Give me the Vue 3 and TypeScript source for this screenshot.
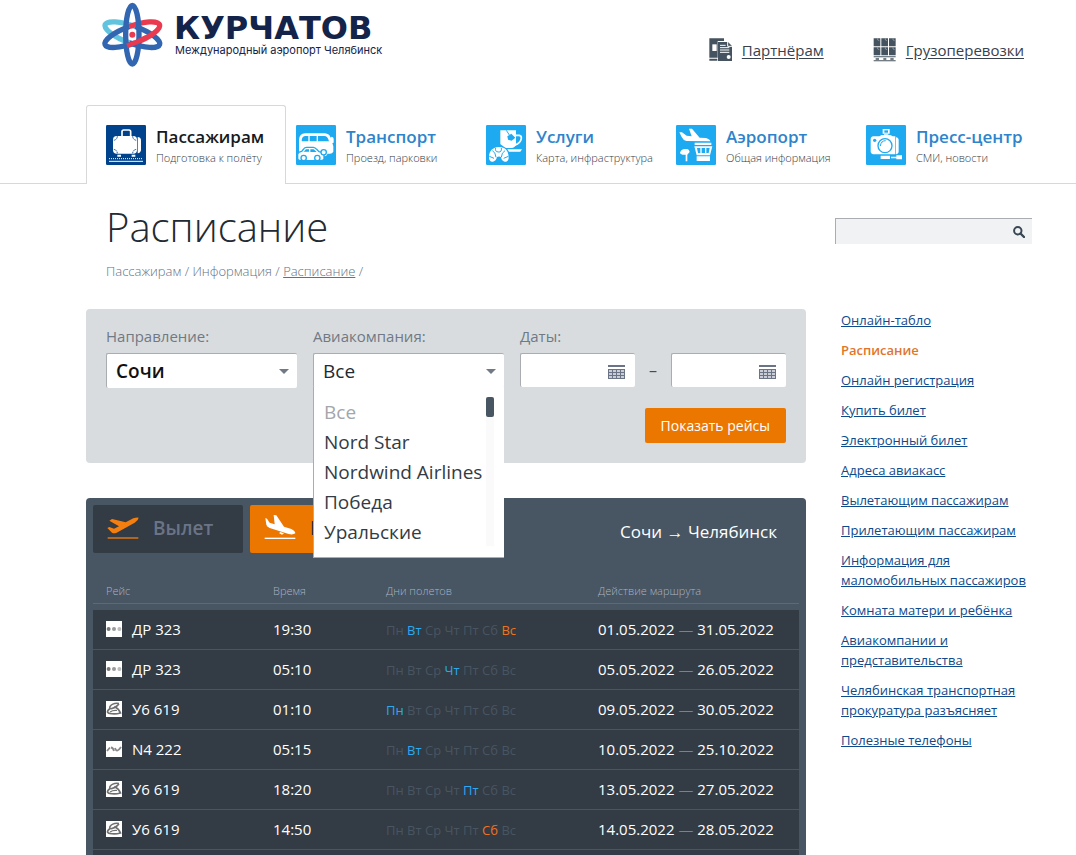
<script setup lang="ts">
import { ref } from 'vue'

interface Section {
  title: string
  note: string
  icon: string
}

interface Flight {
  code: string
  mark: string
  time: string
  days: number[]
  from: string
  to: string
}

const sections: Section[] = [
  { title: 'Пассажирам', note: 'Подготовка к полёту', icon: 'bag' },
  { title: 'Транспорт', note: 'Проезд, парковки', icon: 'cars' },
  { title: 'Услуги', note: 'Карта, инфраструктура', icon: 'cup' },
  { title: 'Аэропорт', note: 'Общая информация', icon: 'tower' },
  { title: 'Пресс-центр', note: 'СМИ, новости', icon: 'camera' },
]

const weekdays = ['Пн', 'Вт', 'Ср', 'Чт', 'Пт', 'Сб', 'Вс']

const flights: Flight[] = [
  { code: 'ДР 323', mark: 'dots', time: '19:30', days: [1, 6], from: '01.05.2022', to: '31.05.2022' },
  { code: 'ДР 323', mark: 'dots', time: '05:10', days: [3], from: '05.05.2022', to: '26.05.2022' },
  { code: 'У6 619', mark: 'swirl', time: '01:10', days: [0], from: '09.05.2022', to: '30.05.2022' },
  { code: 'N4 222', mark: 'wave', time: '05:15', days: [1], from: '10.05.2022', to: '25.10.2022' },
  { code: 'У6 619', mark: 'swirl', time: '18:20', days: [4], from: '13.05.2022', to: '27.05.2022' },
  { code: 'У6 619', mark: 'swirl', time: '14:50', days: [5], from: '14.05.2022', to: '28.05.2022' },
]

const airlines = ['Все', 'Nord Star', 'Nordwind Airlines', 'Победа', 'Уральские']

const sideLinks = [
  'Онлайн-табло',
  'Расписание',
  'Онлайн регистрация',
  'Купить билет',
  'Электронный билет',
  'Адреса авиакасс',
  'Вылетающим пассажирам',
  'Прилетающим пассажирам',
  'Информация для маломобильных пассажиров',
  'Комната матери и ребёнка',
  'Авиакомпании и представительства',
  'Челябинская транспортная прокуратура разъясняет',
  'Полезные телефоны',
]

const direction = ref('Сочи')
const airline = ref('Все')
const dateFrom = ref('')
const dateTo = ref('')
const query = ref('')

function dayClass(flight: Flight, day: number): string {
  if (!flight.days.includes(day)) return 'day'
  return day > 4 ? 'day weekend' : 'day working'
}
</script>

<template>
  <div class="page">
    <header class="top">
      <a class="logo" href="#">
        <svg class="atom" viewBox="0 0 198 198" aria-hidden="true">
          <g fill="none" stroke-width="16">
            <g transform="rotate(20 97 98)">
              <path d="M97 72A87 26 0 0 0 97 124" stroke="#62c3de" />
              <path d="M97 72A87 26 0 0 1 97 124" stroke="#3266b1" />
            </g>
            <g transform="rotate(-20 97 98)">
              <path d="M97 72A87 26 0 0 0 97 124" stroke="#3266b1" />
              <path d="M97 72A87 26 0 0 1 97 124" stroke="#e93a50" />
            </g>
            <ellipse cx="97" cy="98" rx="20" ry="88" stroke="#3266b1" />
            <path d="M81 131Q112 122 140 105" stroke="#e93a50" stroke-width="14" />
          </g>
          <circle cx="97" cy="98" r="9" fill="#e93a50" />
        </svg>
        <span class="logo-text">
          <span class="logo-name">КУРЧАТОВ</span>
          <span class="logo-sub">Международный аэропорт Челябинск</span>
        </span>
      </a>
      <nav class="service" aria-label="Партнёрам и грузоперевозки">
        <a href="#">
          <svg viewBox="0 0 72 72" aria-hidden="true">
            <g fill="#44535f">
              <path d="M1 1h44v8H26v50H1zM1 62h24v6H1z" />
              <path d="M27 12h30l12 12v45H27z" />
            </g>
            <path d="M10 19h13v20H10z" fill="#fff" />
            <path d="M33 22h17M33 29h28M33 36h28M33 43h28" stroke="#fff" stroke-width="3" />
            <path d="M56 11v14h14" fill="none" stroke="#fff" stroke-width="3" />
            <circle cx="59" cy="57" r="6" fill="#fff" />
          </svg>
          <span>Партнёрам</span>
        </a>
        <a href="#">
          <svg viewBox="0 0 72 72" aria-hidden="true">
            <path
              d="M2 1h20v24H2zM25 1h20v24H25zM48 1h20v24H48zM2 28h20v24H2zM25 28h20v24H25zM48 28h20v24H48zM2 55h66v3H2zM2 67h66v3H2z"
              fill="#44535f"
            />
            <path d="M8 63h10M31 63h9M52 63h10" stroke="#44535f" stroke-width="5" />
            <path d="M14 1v5l5 2M37 1v5l5 2M60 1v5l5 2M14 28v5l5 2M37 28v5l5 2M60 28v5l5 2" fill="none" stroke="#fff" stroke-width="1" />
          </svg>
          <span>Грузоперевозки</span>
        </a>
      </nav>
    </header>

    <nav class="sections" aria-label="Разделы">
      <a v-for="(item, i) in sections" :key="item.title" href="#" :class="['section', { active: i === 0 }]">
        <svg class="tile" viewBox="0 0 120 120" aria-hidden="true">
          <rect width="120" height="120" rx="4" :fill="i === 0 ? '#00438c' : '#1eaaf1'" />
          <g v-if="item.icon === 'bag'">
            <path d="M48 34V20q0-5 5-5h16q5 0 5 5v14" fill="none" stroke="#fff" stroke-width="5" />
            <rect x="21" y="33" width="72" height="53" rx="11" fill="#fff" />
            <path d="M95 36q10 1 10 10v27q0 11-10 12z" fill="#fff" />
            <path d="M34 34q-1 11-12 12M80 34q1 11 12 12M34 85q-1-11-12-12M80 85q1-11 12-12" fill="none" stroke="#00438c" stroke-width="3" stroke-dasharray="4 2" />
            <path d="M34 89h11v6H34zM77 89h11v6H77z" fill="#fff" />
            <path d="M9 101h102" stroke="#fff" stroke-width="3" stroke-dasharray="3 3" />
            <path d="M9 109h102" stroke="#fff" stroke-width="3" />
          </g>
          <g v-else-if="item.icon === 'cars'">
            <path d="M9 76V44q1-18 18-19h60q13 1 17 13l3-3q5 0 6 6v12l-4 1 3 10v16q-3 6-10 6h-7q-3 8-12 8t-13-8H15q-6-1-6-10z" fill="#fff" />
            <path d="M17 49q0-15 10-16h10v16zM41 33h21v16H41zM66 33h19q10 0 14 16H66z" fill="#1eaaf1" />
            <path d="M5 101V87q2-6 12-8l6-7q3-5 9-5h20q6 1 10 6l7 7q13 2 15 9v13q-3 5-12 5H13q-7 0-8-6z" fill="#fff" stroke="#1eaaf1" stroke-width="4" />
            <path d="M23 80l7-7h9v7zM43 73h10l9 8H43z" fill="#1eaaf1" />
            <circle cx="23" cy="99" r="8" fill="#fff" stroke="#1eaaf1" stroke-width="4" />
            <circle cx="64" cy="99" r="8" fill="#fff" stroke="#1eaaf1" stroke-width="4" />
            <circle cx="83" cy="82" r="8" fill="#fff" stroke="#1eaaf1" stroke-width="4" />
          </g>
          <g v-else-if="item.icon === 'cup'">
            <path d="M43 16h47v42q-2 10-12 11H60q-14-9-17-12z" fill="#fff" />
            <path d="M90 31h10q7 1 6 9-2 14-20 21" fill="none" stroke="#fff" stroke-width="5" />
            <path d="M61 16l9 14" stroke="#1eaaf1" stroke-width="3" />
            <path d="M64 34l12-8 12 12-11 9-11-3z" fill="#1eaaf1" />
            <path d="M64 73h44l-5 7H69z" fill="#fff" />
            <path d="M9 100q-1-24 16-31 13-6 29 0 14 7 14 31-2 12-12 10-10-3-11-14-6-3-12 0-3 12-12 14-10 2-12-10z" fill="#fff" />
            <path d="M19 77q10 5 11 20M29 69q-3 11 8 12t9-12M57 77q-10 5-11 20M10 94l14 6M67 94l-14 6" fill="none" stroke="#1eaaf1" stroke-width="3" />
          </g>
          <g v-else-if="item.icon === 'tower'">
            <path d="M10 22h8l14 10 15 2-8-23h9l23 27 19 1q12 4 13 10l-72-1q-10-3-14-12z" fill="#fff" />
            <path d="M56 53h50v7H56zM55 64h54l-7 27H62zM62 94h40v14H62zM12 84q2-10 13-12h9q6 2 7 9l-7 8v20h-5V89h-9q-7-1-8-5z" fill="#fff" />
            <path d="M63 69h10v15h-7zM77 69h10v15H77zM91 69h10l-3 15h-7z" fill="#1eaaf1" />
          </g>
          <g v-else>
            <path d="M50 12h21v14H50zM54 28h13v5H54zM22 34h18l7-4h26l7 4h8v54H22q-8-1-8-9V43q0-8 8-9zM90 37q8 1 8 9v33q0 8-8 9z" fill="#fff" />
            <path d="M55 16h11v7H55z" fill="#1eaaf1" />
            <circle cx="57" cy="62" r="21" fill="none" stroke="#1eaaf1" stroke-width="4" />
            <path d="M43 63q2-16 16-16" fill="none" stroke="#1eaaf1" stroke-width="3" />
            <circle cx="26" cy="46" r="5" fill="#1eaaf1" />
            <path d="M44 92h28v10H44zM75 95h17v5H75zM91 91h17v12H91z" fill="#fff" />
          </g>
        </svg>
        <span class="section-text">
          <span class="section-title">{{ item.title }}</span>
          <span class="section-note">{{ item.note }}</span>
        </span>
      </a>
    </nav>

    <div class="body">
      <main class="main">
        <h1>Расписание</h1>
        <p class="crumbs">Пассажирам / Информация / <a href="#">Расписание</a> /</p>

        <form class="filter" @submit.prevent>
          <div class="field">
            <label for="direction">Направление:</label>
            <div class="select">
              <select id="direction" v-model="direction" class="strong">
                <option>Сочи</option>
              </select>
            </div>
          </div>
          <div class="field">
            <label for="airline">Авиакомпания:</label>
            <div class="select">
              <select id="airline" v-model="airline">
                <option v-for="name in airlines" :key="name">{{ name }}</option>
              </select>
              <div class="menu">
                <ul role="listbox" aria-label="Авиакомпания">
                  <li
                    v-for="name in airlines"
                    :key="name"
                    role="option"
                    :aria-selected="name === airline"
                    @click="airline = name"
                  >{{ name }}</li>
                </ul>
                <span class="track"><span class="thumb"></span></span>
              </div>
            </div>
          </div>
          <div class="field dates">
            <label for="date-from">Даты:</label>
            <div class="range">
              <div class="date">
                <input id="date-from" v-model="dateFrom" type="text" />
                <svg viewBox="0 0 17 14" aria-hidden="true">
                  <path d="M0 4h17v10H0z" fill="#c9cdd6" />
                  <path d="M0 4.500h17M0 13.500h17M.5 4v10M16.500 4v10M4.500 4v10M8.500 4v10M12.500 4v10M0 7.500h17M0 10.500h17" stroke="#6b7487" />
                  <path d="M0 0h17v2H0z" fill="#6b7487" />
                </svg>
              </div>
              <span class="dash">–</span>
              <div class="date">
                <input v-model="dateTo" type="text" aria-label="Дата окончания" />
                <svg viewBox="0 0 17 14" aria-hidden="true">
                  <path d="M0 4h17v10H0z" fill="#c9cdd6" />
                  <path d="M0 4.500h17M0 13.500h17M.5 4v10M16.500 4v10M4.500 4v10M8.500 4v10M12.500 4v10M0 7.500h17M0 10.500h17" stroke="#6b7487" />
                  <path d="M0 0h17v2H0z" fill="#6b7487" />
                </svg>
              </div>
            </div>
            <button class="show" type="submit">Показать рейсы</button>
          </div>
        </form>

        <section class="board">
          <div class="board-head">
            <button class="mode" type="button">
              <svg viewBox="0 0 96 72" aria-hidden="true">
                <path d="M1 36l6-3 14 5 15-7L7 14l8-5 41 10 23-12q11-4 16-2-1 8-12 15L29 50q-9 4-14 0z" fill="#f57f0e" />
                <path d="M2 66h92" stroke="#c96f1c" stroke-width="5" />
              </svg>
              <span>Вылет</span>
            </button>
            <button class="mode current" type="button">
              <svg viewBox="0 0 96 72" aria-hidden="true">
                <path d="M4 6l5 2 8 12 15 5L29-3l8 1 23 34 22 7q11 5 12 13-7 5-20 2L17 36Q8 32 7 26z" fill="#fff" />
                <path d="M48 48l12 4-6 4-8-4z" fill="#fff" />
                <path d="M2 67h92" stroke="#fff" stroke-width="4" />
              </svg>
              <span>Прилет</span>
            </button>
            <h2>Сочи <span class="arrow">→</span> Челябинск</h2>
          </div>
          <table>
            <colgroup>
              <col class="c-flight" />
              <col class="c-time" />
              <col class="c-days" />
              <col class="c-range" />
            </colgroup>
            <thead>
              <tr>
                <th scope="col">Рейс</th>
                <th scope="col">Время</th>
                <th scope="col">Дни полетов</th>
                <th scope="col">Действие маршрута</th>
              </tr>
            </thead>
            <tbody>
              <tr v-for="(f, i) in flights" :key="i">
                <td>
                  <span class="flight">
                    <svg viewBox="0 0 16 16" aria-hidden="true">
                      <rect width="16" height="16" fill="#fff" />
                      <g v-if="f.mark === 'dots'">
                        <circle cx="2.600" cy="8" r="2" fill="#777" />
                        <circle cx="8" cy="8" r="2" fill="#999" />
                        <circle cx="13.400" cy="8" r="2" fill="#bbb" />
                      </g>
                      <g v-else-if="f.mark === 'swirl'" fill="none" stroke="#707070">
                        <path d="M13 2.500Q7 1.500 4 5.500 3 8 6 7.500 11 6 13 2.500" stroke-width="1.600" />
                        <path d="M4 7.500Q-1 11.500 4 12.500T14.500 12Q13 8 8.500 5.500" stroke-width="1.700" />
                        <path d="M4 11Q7 9 11 9.500" stroke-width="1.200" />
                      </g>
                      <path v-else d="M1 10l3-3.500M5 6.500q2 0 3 3.500M9 7q1 3 2.500 2.500t3.500-3.500" fill="none" stroke="#888" stroke-width="1.800" />
                    </svg>
                    <span>{{ f.code }}</span>
                  </span>
                </td>
                <td>{{ f.time }}</td>
                <td class="days">
                  <template v-for="(d, n) in weekdays" :key="d"><span :class="dayClass(f, n)">{{ d }}</span>{{ ' ' }}</template>
                </td>
                <td>{{ f.from }} <span class="sep">—</span> {{ f.to }}</td>
              </tr>
            </tbody>
          </table>
        </section>
      </main>

      <aside class="side">
        <form class="search" role="search" @submit.prevent>
          <input v-model="query" type="text" aria-label="Поиск по сайту" />
          <button type="submit" aria-label="Найти">
            <svg viewBox="0 0 12 12" aria-hidden="true">
              <circle cx="4.800" cy="4.800" r="3.700" fill="none" stroke="#3a4654" stroke-width="2" />
              <path d="M7.500 7.500l3.500 3.500" stroke="#3a4654" stroke-width="2.400" stroke-linecap="round" />
            </svg>
          </button>
        </form>
        <ul class="links">
          <li v-for="(link, i) in sideLinks" :key="link">
            <strong v-if="i === 1">{{ link }}</strong>
            <a v-else href="#">{{ link }}</a>
          </li>
        </ul>
      </aside>
    </div>
  </div>
</template>

<style>
body {
  background: #fff;
}
</style>

<style scoped>
.page,
.page * {
  box-sizing: border-box;
}

.page {
  display: flex;
  flex-direction: column;
  min-height: 100vh;
  font-family: "Open Sans", "Noto Sans", sans-serif;
  color: #222a33;
}

button,
input,
select {
  font: inherit;
}

.top {
  display: flex;
  justify-content: space-between;
  height: 105px;
  padding: 2px 52px 0 100px;
}

.logo {
  display: flex;
  gap: 8px;
  height: 66px;
  text-decoration: none;
  color: #14234a;
}

.atom {
  width: 66px;
  height: 66px;
}

.logo-text {
  display: flex;
  flex-direction: column;
  padding-top: 11px;
}

.logo-name {
  font: 700 32px/31px "DejaVu Sans", sans-serif;
}

.logo-sub {
  padding-left: 1px;
  font: 400 11px/12px Inter, sans-serif;
}

.service {
  display: flex;
  gap: 49px;
  padding-top: 36px;
}

.service a {
  display: flex;
  gap: 9px;
  height: 24px;
  font-size: 15px;
  line-height: 24px;
  color: #38424d;
  text-underline-offset: 2px;
}

.service svg {
  width: 24px;
  height: 24px;
}

.sections {
  display: grid;
  grid-template-columns: 200fr repeat(4, 190fr);
  height: 79px;
  padding: 0 30px 0 86px;
  border-bottom: 1px solid #d6d8da;
}

.section {
  display: flex;
  gap: 10px;
  padding: 20px 0 0 10px;
  text-decoration: none;
  color: #2d84cc;
}

.section.active {
  height: 79px;
  padding: 19px 0 0 19px;
  border: 1px solid #d6d8da;
  border-bottom: 0;
  border-radius: 3px 3px 0 0;
  background: #fff;
  color: #16191d;
}

.tile {
  flex: none;
  width: 40px;
  height: 40px;
}

.section-text {
  display: flex;
  flex-direction: column;
  white-space: nowrap;
}

.section-title {
  font-size: 17px;
  font-weight: 600;
  line-height: 24px;
}

.section-note {
  font-size: 11px;
  font-weight: 300;
  line-height: 18px;
  color: #333b44;
}

.body {
  display: grid;
  flex: 1;
  grid-template-columns: minmax(0, 1fr) 201px;
  gap: 29px;
  padding: 0 40px 0 86px;
}

.main {
  display: flex;
  flex-direction: column;
}

h1 {
  margin: 15px 0 0 20px;
  font-size: 40px;
  font-weight: 300;
  line-height: 56px;
}

.crumbs {
  margin: 6px 0 0 20px;
  font-size: 13px;
  font-weight: 300;
  line-height: 20px;
  color: #66707c;
}

.crumbs a {
  color: inherit;
}

.filter {
  display: grid;
  grid-template-columns: 191px 191px 1fr;
  gap: 16px;
  height: 154px;
  margin-top: 28px;
  padding: 15px 20px 0;
  border-radius: 4px;
  background: #d9dcdf;
}

.field label {
  display: block;
  margin-bottom: 5px;
  font-size: 15px;
  line-height: 24px;
  color: #707984;
}

.select {
  position: relative;
}

.select::after {
  content: "";
  position: absolute;
  top: 16px;
  right: 8px;
  border: 5px solid transparent;
  border-top-color: #707984;
  border-bottom: 0;
  pointer-events: none;
}

select {
  display: block;
  width: 100%;
  height: 35px;
  padding: 0 24px 0 9px;
  border: 1px solid #a9adb2;
  border-right: 0;
  border-bottom: 0;
  border-radius: 2px;
  appearance: none;
  background: #fff;
  font-size: 19px;
  color: #222a33;
}

select.strong {
  font-weight: 600;
  color: #111;
}

.menu {
  position: absolute;
  z-index: 2;
  top: 34px;
  left: 0;
  display: flex;
  justify-content: space-between;
  width: 100%;
  height: 171px;
  padding: 10px 10px 11px;
  border-bottom: 1px solid #a9adb2;
  border-left: 1px solid #a9adb2;
  background: #fff;
}

.menu ul {
  width: 0;
  margin: 0;
  padding: 0;
  list-style: none;
  font-size: 19px;
  line-height: 30px;
  white-space: nowrap;
  color: #333b44;
}

.menu li[aria-selected="true"] {
  color: #a3a6aa;
}

.track {
  width: 8px;
  background: #fafafa;
}

.thumb {
  display: block;
  width: 8px;
  height: 20px;
  border-radius: 2px;
  background: #485562;
}

.range {
  display: flex;
  justify-content: space-between;
}

.date {
  position: relative;
  width: 115px;
}

.date input {
  display: block;
  width: 100%;
  height: 34px;
  padding: 0 34px 0 8px;
  border: 1px solid #a9adb2;
  border-right: 0;
  border-bottom: 0;
  border-radius: 2px;
  background: #fff;
  font-size: 15px;
}

.date svg {
  position: absolute;
  top: 12px;
  right: 10px;
  width: 17px;
  height: 14px;
}

.dash {
  line-height: 34px;
  color: #444c55;
}

.show {
  display: block;
  height: 35px;
  margin: 21px 0 0 auto;
  padding: 0 16px;
  border: 0;
  border-radius: 2px;
  background: #ec7700;
  font-size: 14px;
  color: #fff;
}

.board {
  display: flex;
  flex: 1;
  flex-direction: column;
  margin-top: 35px;
  padding: 7px 7px 0;
  border-radius: 4px 4px 0 0;
  background: #485562;
}

.board::after {
  content: "";
  flex: 1;
  min-height: 5px;
  background: #333b44;
}

.board-head {
  display: flex;
  gap: 7px;
  height: 48px;
}

.mode {
  display: flex;
  align-items: center;
  gap: 14px;
  width: 150px;
  padding: 0 0 2px 14px;
  border: 0;
  border-radius: 2px;
  background: #333b44;
  font-size: 19px;
  font-weight: 600;
  color: #6b7487;
}

.mode svg {
  width: 32px;
  height: 24px;
  overflow: visible;
}

.mode.current {
  background: #ec7700;
  color: #222a33;
}

h2 {
  flex: 1;
  margin: 0;
  padding: 3px 22px 0 0;
  text-align: right;
  font-size: 17px;
  font-weight: 500;
  line-height: 48px;
  color: #fff;
}

.arrow {
  font-family: "Liberation Sans", sans-serif;
}

table {
  width: 100%;
  border-spacing: 0;
  table-layout: fixed;
  font-size: 15px;
  font-weight: 500;
  color: #fff;
}

.c-flight {
  width: 167px;
}

.c-time {
  width: 113px;
}

.c-days {
  width: 212px;
}

th {
  height: 51px;
  padding: 24px 0 0 13px;
  border-bottom: 1px solid #5c6977;
  text-align: left;
  font-size: 11px;
  font-weight: 300;
  color: #a9b3c2;
}

tbody::before {
  content: "";
  display: block;
  height: 6px;
}

td {
  height: 40px;
  padding: 0 0 2px 13px;
  border-bottom: 1px solid #485562;
  background: #333b44;
  white-space: nowrap;
}

.flight {
  display: flex;
  align-items: center;
  gap: 10px;
}

.flight svg {
  width: 16px;
  height: 16px;
}

.days {
  padding-bottom: 0;
  font-size: 13px;
  font-weight: 400;
}

.day {
  color: #485562;
}

.working {
  color: #2ea8ee;
}

.weekend {
  color: #ee7420;
}

.sep {
  font-weight: 300;
  color: #a9b3c2;
}

.side {
  padding-top: 34px;
}

.search {
  display: flex;
  height: 26px;
  margin-right: 4px;
  border-top: 1px solid #a9adb2;
  border-left: 1px solid #a9adb2;
  background: #f1f2f4;
}

.search input {
  flex: 1;
  min-width: 0;
  padding: 0 6px;
  border: 0;
  background: transparent;
  font-size: 13px;
}

.search button {
  padding: 0 7px;
  border: 0;
  background: transparent;
}

.search svg {
  display: block;
  width: 12px;
  height: 12px;
}

.links {
  margin: 66px 0 0;
  padding: 0 0 0 6px;
  list-style: none;
  font-size: 13px;
  line-height: 20px;
}

.links li {
  margin-bottom: 10px;
}

.links a {
  color: #0e4a8c;
}

.links strong {
  font-weight: 600;
  color: #e0752b;
}
</style>
